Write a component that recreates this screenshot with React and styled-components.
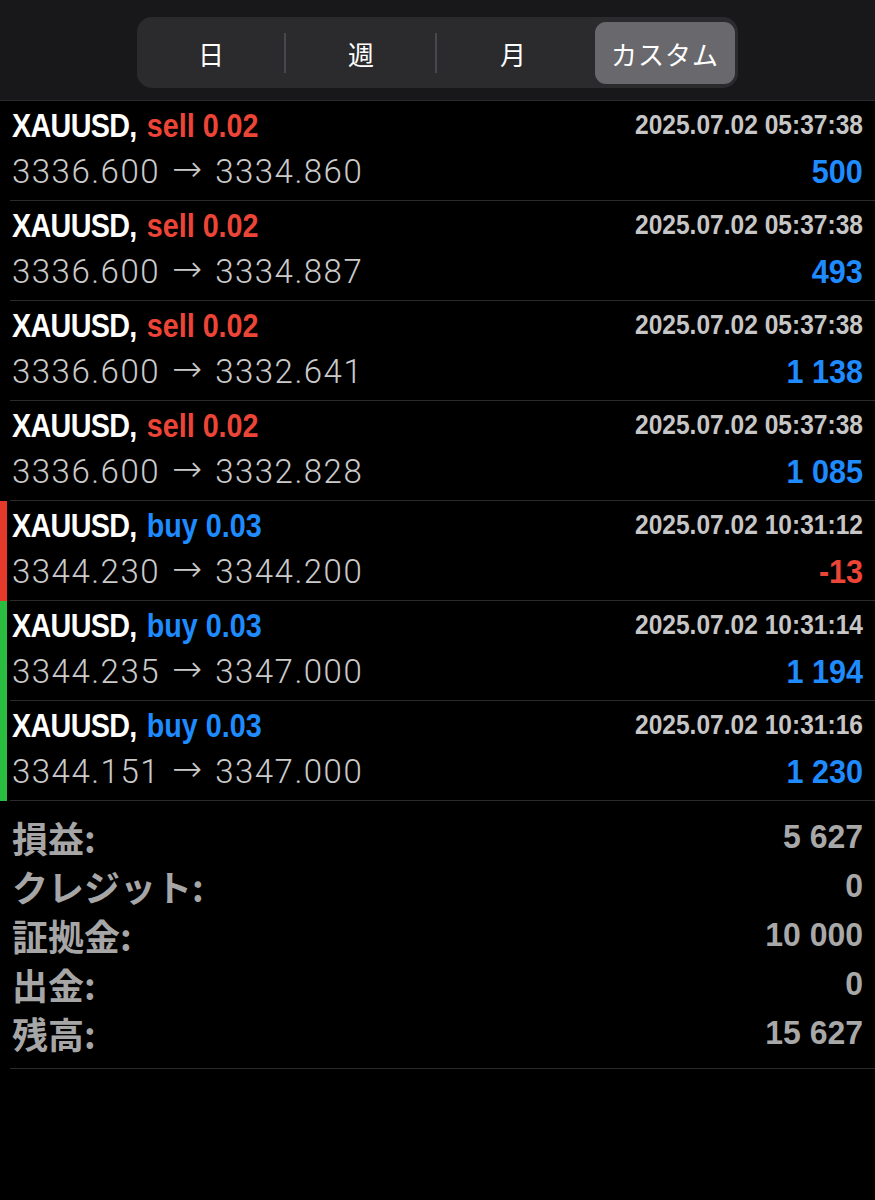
import React from 'react';
import styled, { createGlobalStyle } from 'styled-components';

const GlobalStyle = createGlobalStyle`
  html, body {
    margin: 0;
    padding: 0;
    background: #000;
  }
  body {
    font-family: 'Liberation Sans', 'Noto Sans CJK JP', sans-serif;
  }
`;

const Screen = styled.div`
  width: 875px;
  min-height: 1200px;
  background: #000;
`;

const Header = styled.div`
  height: 101px;
  background: #18181a;
  border-bottom: 1px solid #2a2a2c;
  display: flex;
  justify-content: center;
  padding-top: 17px;
  box-sizing: border-box;
`;

const Segmented = styled.div`
  width: 601px;
  height: 71px;
  background: #2b2b2e;
  border-radius: 15px;
  display: grid;
  grid-template-columns: 149px 151px 153px 1fr;
  padding: 5px 3px 4px 0;
  box-sizing: border-box;
`;

const Segment = styled.div`
  position: relative;
  display: flex;
  align-items: center;
  justify-content: center;
  margin-left: ${p => (p.$active ? '5px' : '0')};
  border-radius: 11px;
  background: ${p => (p.$active ? '#69696d' : 'transparent')};
  color: #fff;
  font-family: 'Noto Sans CJK JP', sans-serif;
  font-size: 26px;
  letter-spacing: 1px;

  &::after {
    content: '';
    display: ${p => (p.$divider ? 'block' : 'none')};
    position: absolute;
    right: 0;
    top: 11px;
    bottom: 11px;
    width: 2px;
    background: #48484c;
  }
`;

const Row = styled.div`
  position: relative;
  height: 100px;
  display: flex;
  justify-content: space-between;
  padding: 0 12px;
  box-sizing: border-box;

  &::before {
    content: '';
    display: ${p => (p.$bar ? 'block' : 'none')};
    position: absolute;
    left: 0;
    top: 0;
    bottom: 0;
    width: 7px;
    background: ${p => p.$bar};
  }

  &::after {
    content: '';
    position: absolute;
    left: 10px;
    right: 0;
    bottom: 0;
    height: 1px;
    background: #2b2b2d;
  }
`;

const Col = styled.div`
  display: flex;
  flex-direction: column;
  align-items: ${p => (p.$right ? 'flex-end' : 'flex-start')};
  padding-top: 1px;
`;

// no condensed face installed, so squeeze the bold sans horizontally
const Symbol = styled.div`
  height: 46px;
  display: flex;
  align-items: center;
  font-family: 'Liberation Sans', sans-serif;
  font-weight: 700;
  font-size: 34px;
  color: #fff;
  white-space: pre;
  transform: scaleX(0.845);
  transform-origin: left center;
`;

const Ticker = styled.span`
  letter-spacing: -0.8px;
`;

const Side = styled.span`
  margin-left: 12px;
  color: ${p => (p.$buy ? '#1e8bff' : '#ec4537')};
`;

const Prices = styled.div`
  height: 46px;
  display: flex;
  align-items: center;
  font-family: Roboto, 'Liberation Sans', sans-serif;
  font-weight: 300;
  font-size: 33px;
  letter-spacing: 1.5px;
  color: #cbcbcb;
  white-space: pre;
`;

const Arrow = styled.span`
  margin: 0 13px 0 12px;
  font-family: 'DejaVu Sans', sans-serif;
  font-weight: 300;
  font-size: 36px;
  letter-spacing: 0;
  line-height: 1;
  position: relative;
  top: -2px;
`;

const Time = styled.div`
  height: 46px;
  display: flex;
  align-items: center;
  font-family: 'Liberation Sans', sans-serif;
  font-weight: 700;
  font-size: 28px;
  color: #c6c6c6;
  white-space: pre;
  transform: scaleX(0.877);
  transform-origin: right center;
`;

const Profit = styled.div`
  height: 46px;
  display: flex;
  align-items: center;
  font-family: 'Liberation Sans', sans-serif;
  font-weight: 700;
  font-size: 34px;
  color: ${p => (p.$loss ? '#ec4537' : '#1e8bff')};
  white-space: pre;
  transform: scaleX(0.9);
  transform-origin: right center;
`;

const Summary = styled.div`
  margin: 0 0 0 10px;
  padding: 11px 12px 11px 2px;
  border-bottom: 1px solid #2b2b2d;
  display: flex;
  flex-direction: column;
`;

const SummaryRow = styled.div`
  height: 49px;
  display: flex;
  align-items: center;
  justify-content: space-between;
`;

const Label = styled.span`
  font-family: 'Noto Sans CJK JP', sans-serif;
  font-weight: 700;
  font-size: 36px;
  color: #a6a6a6;
`;

const Value = styled.span`
  display: inline-block;
  font-family: 'Liberation Sans', sans-serif;
  font-weight: 700;
  font-size: 34px;
  color: #a8a8a8;
  white-space: pre;
  transform: scaleX(0.94);
  transform-origin: right center;
`;

const deals = [
  { side: 'sell', vol: '0.02', from: '3336.600', to: '3334.860', time: '2025.07.02 05:37:38', profit: '500' },
  { side: 'sell', vol: '0.02', from: '3336.600', to: '3334.887', time: '2025.07.02 05:37:38', profit: '493' },
  { side: 'sell', vol: '0.02', from: '3336.600', to: '3332.641', time: '2025.07.02 05:37:38', profit: '1 138' },
  { side: 'sell', vol: '0.02', from: '3336.600', to: '3332.828', time: '2025.07.02 05:37:38', profit: '1 085' },
  { side: 'buy', vol: '0.03', from: '3344.230', to: '3344.200', time: '2025.07.02 10:31:12', profit: '-13', bar: '#e5392c' },
  { side: 'buy', vol: '0.03', from: '3344.235', to: '3347.000', time: '2025.07.02 10:31:14', profit: '1 194', bar: '#2bbd3f' },
  { side: 'buy', vol: '0.03', from: '3344.151', to: '3347.000', time: '2025.07.02 10:31:16', profit: '1 230', bar: '#2bbd3f' },
];

const totals = [
  ['損益:', '5 627'],
  ['クレジット:', '0'],
  ['証拠金:', '10 000'],
  ['出金:', '0'],
  ['残高:', '15 627'],
];

const tabs = ['日', '週', '月', 'カスタム'];

export default function App() {
  return (
    <Screen>
      <GlobalStyle />
      <Header>
        <Segmented>
          {tabs.map((t, i) => (
            <Segment key={t} $active={i === 3} $divider={i < 2}>
              {t}
            </Segment>
          ))}
        </Segmented>
      </Header>

      {deals.map((d, i) => (
        <Row key={i} $bar={d.bar}>
          <Col>
            <Symbol>
              <Ticker>XAUUSD,</Ticker>
              <Side $buy={d.side === 'buy'}>{d.side} {d.vol}</Side>
            </Symbol>
            <Prices>
              {d.from}
              <Arrow>→</Arrow>
              {d.to}
            </Prices>
          </Col>
          <Col $right>
            <Time>{d.time}</Time>
            <Profit $loss={d.profit.startsWith('-')}>{d.profit}</Profit>
          </Col>
        </Row>
      ))}

      <Summary>
        {totals.map(([k, v]) => (
          <SummaryRow key={k}>
            <Label>{k}</Label>
            <Value>{v}</Value>
          </SummaryRow>
        ))}
      </Summary>
    </Screen>
  );
}
